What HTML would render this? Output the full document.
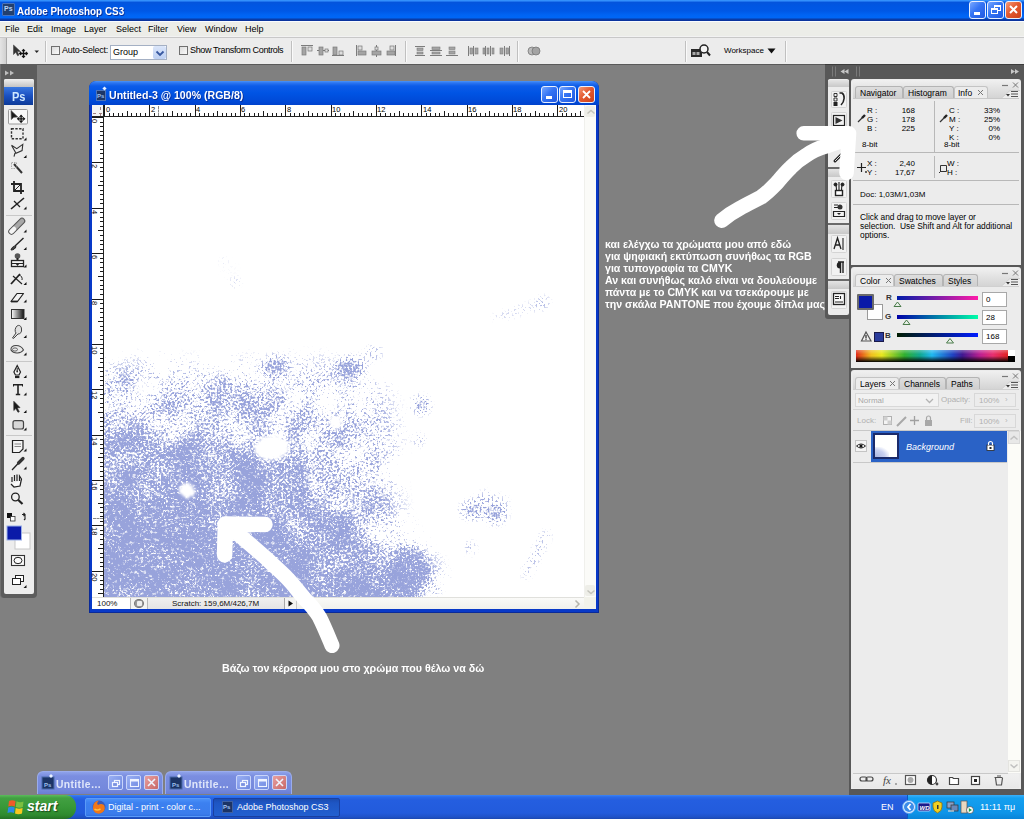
<!DOCTYPE html>
<html><head><meta charset="utf-8">
<style>
*{margin:0;padding:0;box-sizing:border-box}
html,body{width:1024px;height:819px;overflow:hidden;background:#808080;font-family:"Liberation Sans",sans-serif;position:relative}
.a{position:absolute}
.tx{position:absolute;white-space:nowrap;line-height:1}
svg{position:absolute;overflow:visible}
#title{left:0;top:0;width:1024px;height:21px;background:linear-gradient(#3c9cff 0,#2a84f8 1px,#0454dc 2.5px,#0056e2 5px,#0058e6 11px,#0064f4 15px,#0066f6 17.5px,#0a3ca8 19.5px,#0a3098 21px)}
.xb{top:1px;width:17px;height:18px;border:1px solid #e8f0ff;border-radius:3px;background:linear-gradient(135deg,#78a8ff,#3474f4 45%,#2058e0)}
#menu{left:0;top:21px;width:1024px;height:16px;background:#ecede8;border-top:1px solid #f8fcff;border-bottom:1px solid #f2f2f2}
.m{font-size:9px;color:#000;top:3px}
#opts{left:0;top:37px;width:1024px;height:28px;background:#ececec;border-top:1px solid #c8c8c8;border-bottom:1px solid #5a5a5a}
.sep{position:absolute;top:3px;width:2px;height:21px;border-left:1px solid #c0c0c0;border-right:1px solid #fafafa}
.o{font-size:9px;color:#000}
.cb{position:absolute;width:9px;height:9px;border:1px solid #707070;background:linear-gradient(135deg,#dcdcdc,#fafafa)}
.p{font-size:8px;color:#000}
.rl{font-size:7.5px;color:#000}
.tool{position:absolute;left:9px;width:18px;height:15px}
.tab{position:absolute;height:12px;border:1px solid #b4b4b4;border-bottom:none;border-radius:3px 3px 0 0;background:linear-gradient(#dedede,#cfcfcf)}
.tab.act{background:#ececec;border-color:#c4c4c4}
.phdr{position:absolute;left:851px;width:170px;background:linear-gradient(#f4f4f4,#d6d6d6)}
.ibox{position:absolute;background:#fff;border:1px solid #a8a8a8}
.mw{position:absolute;top:771px;height:23px;background:linear-gradient(#8ea2ea,#7b8ee0 4px,#7488dc 18px,#6a7ed4);border-radius:6px 6px 0 0;border:1px solid #9aacec;border-bottom:none}
.mb{position:absolute;top:4px;width:15px;height:15px;border:1px solid #c8d4fa;border-radius:2px;background:linear-gradient(135deg,#9ab0f4,#6e88e0)}
</style></head><body>
<!-- ===== TITLE ===== -->
<div id="title" class="a">
  <div class="a" style="left:2px;top:3px;width:13px;height:13px;background:#23406e;border:1px solid #4a72b8;border-radius:1px"><div class="tx" style="left:1px;top:1px;color:#b8d4f8;font-size:7px;font-weight:bold">Ps</div></div>
  <div class="tx" style="left:17px;top:6px;color:#fff;font-weight:bold;font-size:11.5px;transform:scaleX(.86);transform-origin:0 0;text-shadow:1px 1px 0 #0a3098">Adobe Photoshop CS3</div>
  <div class="a xb" style="left:969px"><div class="a" style="left:4px;top:10px;width:6px;height:3px;background:#fff"></div></div>
  <div class="a xb" style="left:987px"><div class="a" style="left:6px;top:3px;width:7px;height:6px;border:1px solid #fff;border-top-width:2px"></div><div class="a" style="left:3px;top:6px;width:7px;height:6px;border:1px solid #fff;border-top-width:2px;background:#3070f0"></div></div>
  <div class="a xb" style="left:1005px;background:linear-gradient(135deg,#f49a78,#e45a30 45%,#cc4018)"><svg width="15" height="16" style="left:0;top:0"><path d="M4 4L11 11M11 4L4 11" stroke="#fff" stroke-width="2"/></svg></div>
</div>

<!-- ===== MENU ===== -->
<div id="menu" class="a">
  <span class="tx m" style="left:5px">File</span><span class="tx m" style="left:27px">Edit</span><span class="tx m" style="left:51px">Image</span><span class="tx m" style="left:84px">Layer</span><span class="tx m" style="left:116px">Select</span><span class="tx m" style="left:148px">Filter</span><span class="tx m" style="left:177px">View</span><span class="tx m" style="left:205px">Window</span><span class="tx m" style="left:245px">Help</span>
</div>

<!-- ===== OPTIONS ===== -->
<div id="opts" class="a">
  <div class="a" style="left:0;top:0;width:7px;height:26px;background:linear-gradient(90deg,#e4e4e4,#d0d0d0);border-right:1px solid #a8a8a8"></div>
  <svg width="45" height="26" style="left:0;top:0">
    <path d="M13.5 7 L13.5 16.5 L15.8 14.3 L17.6 17.8 L19 17.1 L17.3 13.6 L20.5 13.6 Z" fill="#333" stroke="#444" stroke-width=".6"/>
    <path d="M19.8 15.5 h7.4 M23.5 11.8 v7.4" stroke="#111" stroke-width="1.3" fill="none"/>
    <path d="M22 13.2 L23.5 11.6 L25 13.2 M22 17.8 L23.5 19.4 L25 17.8 M21.2 14 L19.6 15.5 L21.2 17 M25.8 14 L27.4 15.5 L25.8 17" stroke="#111" stroke-width="1.1" fill="none"/>
    <path d="M34.5 12.5 h4.5 l-2.25 2.5z" fill="#222"/>
  </svg>
  <div class="sep" style="left:45px"></div>
  <div class="cb" style="left:51px;top:8px"></div><div class="tx o" style="left:62px;top:8px;letter-spacing:-0.25px">Auto-Select:</div>
  <div class="a" style="left:110px;top:7px;width:57px;height:15px;background:#fff;border:1px solid #a4b0c4"></div>
  <div class="tx o" style="left:113px;top:10px">Group</div>
  <div class="a" style="left:153px;top:8px;width:13px;height:13px;background:linear-gradient(#dbe6fa,#bccff2);border-radius:2px"></div>
  <svg width="10" height="8" style="left:155px;top:12px"><path d="M1.5 1.5 L5 5 L8.5 1.5" stroke="#3858a0" stroke-width="1.8" fill="none"/></svg>
  <div class="cb" style="left:179px;top:8px"></div><div class="tx o" style="left:190px;top:8px;letter-spacing:-0.36px">Show Transform Controls</div>
  <div class="sep" style="left:291px"></div>
  <svg width="250" height="14" style="left:299px;top:7px" fill="#8a8a8a" stroke="#777">
    <g stroke-width="1">
      <path d="M2 0.5 h12" stroke="#7c7c7c"/><rect x="3" y="2" width="4" height="8" fill="#a4a4a4" stroke="#7c7c7c" stroke-width=".7"/><rect x="9" y="2" width="4" height="4" fill="#ddd" stroke="#777" stroke-width=".7"/>
      <path d="M18 5.5 h12" stroke="#777"/><rect x="20" y="2" width="4" height="8" fill="#a4a4a4" stroke="#7c7c7c" stroke-width=".7"/><rect x="26" y="4" width="3" height="3" fill="#ddd" stroke="#777" stroke-width=".7"/>
      <path d="M33 10.5 h12" stroke="#7c7c7c"/><rect x="34" y="2" width="4" height="8" fill="#a4a4a4" stroke="#7c7c7c" stroke-width=".7"/><rect x="40" y="6" width="4" height="4" fill="#ddd" stroke="#777" stroke-width=".7"/>
      <path d="M57.5 0 v11" stroke="#7c7c7c"/><rect x="59" y="1" width="4" height="4" fill="#ddd" stroke="#777" stroke-width=".7"/><rect x="59" y="6" width="8" height="4" fill="#a4a4a4" stroke="#7c7c7c" stroke-width=".7"/>
      <path d="M77.5 0 v12" stroke="#7c7c7c"/><rect x="76" y="2" width="3" height="3" fill="#ddd" stroke="#777" stroke-width=".7"/><rect x="73" y="6" width="9" height="4" fill="#a4a4a4" stroke="#7c7c7c" stroke-width=".7"/>
      <path d="M96.5 0 v11" stroke="#7c7c7c"/><rect x="91" y="1" width="4" height="4" fill="#ddd" stroke="#777" stroke-width=".7"/><rect x="88" y="6" width="8" height="4" fill="#a4a4a4" stroke="#7c7c7c" stroke-width=".7"/>
    </g>
  </svg>
  <div class="sep" style="left:405px"></div>
  <svg width="140" height="14" style="left:413px;top:7px">
    <g stroke="#7c7c7c" stroke-width="1" fill="#a4a4a4">
      <path d="M2 1.5h10M2 10.5h10" /><rect x="4" y="3" width="6" height="2.5" stroke-width=".6"/><rect x="4" y="7" width="6" height="2" stroke-width=".6"/>
      <path d="M17 5.5h12M17 10.5h12"/><rect x="19" y="2" width="8" height="2.5" stroke-width=".6"/><rect x="19" y="7" width="8" height="2" stroke-width=".6"/>
      <path d="M33 10.5h12"/><rect x="36" y="2" width="6" height="2.5" stroke-width=".6"/><rect x="36" y="6" width="6" height="3" stroke-width=".6"/>
      <path d="M55.5 1v10M60.5 1v10"/><rect x="57" y="3" width="2.5" height="6" stroke-width=".6"/><rect x="62" y="3" width="3" height="6" stroke-width=".6"/>
      <path d="M72.5 1v10M77.5 1v10"/><rect x="70" y="3" width="2" height="6" stroke-width=".6"/><rect x="74" y="3" width="2" height="6" stroke-width=".6"/><rect x="79" y="3" width="2" height="6" stroke-width=".6"/>
      <path d="M91.5 1v10M96.5 1v10"/><rect x="87" y="3" width="3" height="6" stroke-width=".6"/><rect x="93" y="3" width="2.5" height="6" stroke-width=".6"/>
    </g>
    <g stroke="#777" fill="#bbb" stroke-width=".8"><circle cx="119" cy="6" r="4"/><circle cx="123" cy="6" r="4" fill="#a4a4a4"/></g>
  </svg>
  <div class="sep" style="left:517px"></div>
  <div class="sep" style="left:685px"></div>
  <svg width="22" height="16" style="left:690px;top:5px">
    <rect x="1" y="6" width="11" height="8" fill="#2a2a2a"/><rect x="2.5" y="9" width="3" height="3" fill="#aaa"/><rect x="6.5" y="9" width="3" height="3" fill="#aaa"/>
    <circle cx="14" cy="6" r="4" fill="#f4f4f4" stroke="#222" stroke-width="1.5"/><path d="M17 9 L20 12.5" stroke="#222" stroke-width="2"/>
  </svg>
  <div class="tx o" style="left:724px;top:9px;font-size:8px">Workspace</div>
  <svg width="10" height="8" style="left:767px;top:10px"><path d="M0.5 0.5 h8 l-4 5z" fill="#111"/></svg>
  <div class="sep" style="left:785px"></div>
</div>

<!-- ===== TOOLBOX ===== -->
<div class="a" style="left:0;top:64px;width:37px;height:534px;background:#5c5c5c;border-radius:0 0 4px 4px;border-left:1px solid #707070"></div>
<div class="a" style="left:4px;top:79px;width:30px;height:515px;background:#ededed;border-radius:2px"></div>
<div class="a" style="left:4px;top:79px;width:30px;height:8px;background:linear-gradient(#f0f0f0,#c4c4c4);border-radius:2px 2px 0 0"></div>
<div class="a" style="left:4px;top:87px;width:29px;height:18px;background:linear-gradient(#3a78e0,#1a50c0 50%,#0d3a98)"></div>
<div class="tx" style="left:12px;top:91px;color:#cfe8ff;font-weight:bold;font-size:12px;transform:scaleX(.92);transform-origin:0 0">Ps</div>
<svg width="37" height="534" style="left:0;top:64px">
  <path d="M5 6.5 L9 9 L5 11.5Z M10 6.5 L14 9 L10 11.5Z" fill="#bdbdbd"/>
</svg>
<svg width="37" height="600" style="left:0;top:0">
  <g fill="none" stroke="#222" stroke-width="1.2">
    <!-- move selected -->
    <rect x="8.5" y="109.5" width="19" height="14.5" rx="1" fill="#f8f8f8" stroke="#9a9a9a" stroke-width="1"/>
    <path d="M11 110.5 L17.8 117 L13.8 117.3 L11.3 119.5 Z" fill="#1a1a1a" stroke="#555" stroke-width=".7"/>
    <path d="M17.8 118.8h6.6 M21.1 115.5v6.6" stroke="#111" stroke-width="1.3"/><path d="M19.6 117 L21.1 115.3 L22.6 117 M19.6 120.6 L21.1 122.3 L22.6 120.6 M19.3 117.3 L17.6 118.8 L19.3 120.3 M22.9 117.3 L24.6 118.8 L22.9 120.3" stroke="#111" stroke-width="1.1"/>
    <!-- marquee -->
    <rect x="11.5" y="128.7" width="11.5" height="10" stroke-dasharray="2.4 1.4" stroke-width="1.4" stroke="#333"/>
    <!-- lasso -->
    <path d="M11.5 145.3 L16.8 148.6 L22.8 144.3 L22.1 150.6 L16 153.3 L11.5 145.3 M15 153 L14 156.7" stroke-width="1.1" stroke="#333"/>
    <!-- wand -->
    <path d="M14 164 L22 173" stroke-width="2" stroke="#333"/><rect x="11.5" y="162.5" width="5" height="6" stroke="#999" stroke-width=".8" stroke-dasharray="1.5 1"/>
    <!-- crop -->
    <path d="M14 181v10h10 M11 184h10v10" stroke-width="1.8"/><path d="M15 190 L21 184" stroke-width="1"/>
    <!-- slice -->
    <path d="M11 209 L24 198" stroke-width="1.6"/><path d="M14 201 L20 207" stroke-width="1.3"/>
    <!-- separator -->
    <path d="M6 215.5h26" stroke="#c8c8c8" stroke-width="1"/>
    <!-- heal -->
    <path d="M11.5 231.5 L22 221" stroke="#555" stroke-width="6.5" stroke-linecap="round"/><path d="M11.5 231.5 L22 221" stroke="#a8a8a8" stroke-width="4.5" stroke-linecap="round"/><path d="M11.5 231.5 L14 229" stroke="#f4f4f4" stroke-width="4.5" stroke-linecap="round"/>
    <!-- brush -->
    <path d="M15 246 L23.5 238" stroke-width="1.4"/><path d="M11 250 C12 247 14 245.5 16 246.5 C15.5 248.5 13.5 250 11 250Z" fill="#444" stroke-width="1"/>
    <!-- stamp -->
    <circle cx="17.5" cy="256" r="2.8" fill="#555" stroke="none"/><path d="M17.5 258v2.5" stroke-width="2"/><rect x="11.5" y="260.5" width="12" height="6" fill="#f4f4f4" stroke-width="1.3"/><path d="M11.5 263.5h12" stroke-width="1"/><path d="M15.5 263.5 h4 l-2 2.5z" fill="#222" stroke="none"/>
    <!-- history -->
    <path d="M11 284 L20 274" stroke-width="1.8"/><path d="M13 276 L22 284" stroke-width="1.2"/><path d="M19 275 a4 4 0 0 1 3 5" stroke-width="1"/>
    <!-- eraser -->
    <path d="M11 301.5 L17 293.5 L23.5 293.5 L17.5 301.5 Z" fill="#f4f4f4" stroke-width="1.2" stroke-linejoin="round"/><path d="M11 301.5 h6.5" stroke-width="1.8"/>
    <!-- gradient -->
    <defs><linearGradient id="tg"><stop offset="0" stop-color="#fff"/><stop offset="1" stop-color="#111"/></linearGradient></defs>
    <rect x="11.5" y="309.5" width="12.5" height="9" fill="url(#tg)" stroke="#333" stroke-width="1"/>
    <!-- blur -->
    <path d="M12.5 338 L16 333 C14.5 331 15 328 17 326 C19 324.5 21.5 326 21.5 329 C22 332 20.5 334 18 334 L13.5 338.5Z" fill="#e0e0e0" stroke="#444" stroke-width="1"/>
    <!-- dodge -->
    <path d="M11 350 C10.5 347 13 345.5 16 345.5 C19 345.5 22 347 23.5 350 C21 353.5 14 354.5 11 350Z" fill="#e8e8e8" stroke="#444" stroke-width="1.1"/><ellipse cx="15" cy="349.5" rx="2.5" ry="1.6" fill="none" stroke="#555" stroke-width=".9"/>
    <path d="M6 361.5h26" stroke="#c8c8c8" stroke-width="1"/>
    <!-- pen -->
    <path d="M17.2 365.5 L20.5 372 L19 375 h-3.6 L13.9 372 Z" fill="#f4f4f4" stroke-width="1.2"/><path d="M17.2 368v3.5" stroke-width="1"/><circle cx="17.2" cy="371.5" r=".9" fill="#333" stroke="none"/><path d="M15 377h4.4" stroke-width="2.2"/>
    <!-- type T -->
    <path d="M13.3 384.8h9.4 M18 384.5v10 M15.8 394.5h4.4" stroke-width="1.6"/><path d="M13.5 384 v2.5 M22.5 384 v2.5" stroke-width="1"/>
    <!-- path selection -->
    <path d="M13.8 401.3 L13.8 410.5 L15.8 408.6 L18 412.3 L19.3 411.6 L17.2 407.9 L20 407.6 Z" fill="#1a1a1a" stroke="#333" stroke-width=".7"/>
    <!-- shape -->
    <rect x="13" y="420.7" width="10.5" height="8.3" rx="2" fill="#d8d8d8" stroke="#444" stroke-width="1.2"/>
    <path d="M6 435.5h26" stroke="#c8c8c8" stroke-width="1"/>
    <!-- notes -->
    <path d="M12.5 440.5h10.5v8.5l-3.5 3.5h-7z" fill="#f4f4f4" stroke-width="1.2"/><path d="M14.5 444h6.5 M14.5 446.5h6.5" stroke="#888" stroke-width="1"/>
    <!-- eyedropper -->
    <path d="M12 470 L19.5 462" stroke-width="1.2"/><path d="M18.5 463 L23 458.5" stroke="#333" stroke-width="3.2" stroke-linecap="round"/>
    <!-- hand -->
    <path d="M12 482 L12 477 M14.5 481 L14.5 475 M17 481 L17 474.5 M19.5 481 L19.5 476 L21.5 479 L20 486 L14 487 L11 484" stroke-width="1.2" fill="#fafafa"/>
    <!-- zoom -->
    <circle cx="15.4" cy="497" r="3.8" stroke-width="1.3" fill="#f0f0f0"/><path d="M18.3 500 L22.5 504" stroke-width="2.2"/>
    <!-- default colors -->
    <rect x="7" y="513" width="5" height="5" fill="#111" stroke="none"/><rect x="10.5" y="516.5" width="4.5" height="4.5" fill="#fff" stroke="#333" stroke-width=".8"/>
    <path d="M22 514.5 h3 v4 M23.5 513 l1.5 1.5 l-1.5 1.5 M24 520 l1.5 -1.5" stroke-width="1.1"/>
    <!-- quick mask -->
    <rect x="11.5" y="555.5" width="13" height="10" fill="#fafafa" stroke="#333" stroke-width="1.1"/><ellipse cx="18" cy="560.5" rx="4" ry="3.2" stroke-width="1"/>
    <!-- screen mode -->
    <rect x="15.5" y="575.5" width="8" height="6" fill="#fff" stroke-width="1"/><rect x="12.5" y="578.5" width="8" height="6" fill="#fff" stroke-width="1"/>
  </g>
  <!-- flyout triangles -->
  <g fill="#111">
    <path d="M23.5 140.5h3v-3z M23.5 158h3v-3z M23.5 209.5h3v-3z M23.5 232.5h3v-3z M23.5 250h3v-3z M23.5 267.5h3v-3z M23.5 285h3v-3z M23.5 302.5h3v-3z M23.5 320h3v-3z M23.5 338h3v-3z M23.5 355.5h3v-3z M23.5 378h3v-3z M23.5 395.5h3v-3z M23.5 413h3v-3z M23.5 430.5h3v-3z M23.5 451.5h3v-3z M23.5 469.5h3v-3z M23.5 588h3v-3z"/>
  </g>
  <!-- fg/bg colors -->
  <rect x="15" y="533" width="15" height="16" fill="#fff" stroke="#c8c8c8" stroke-width="1"/>
  <rect x="7" y="526" width="14.5" height="14" fill="#0a1aa8" stroke="#9ab0e8" stroke-width="1"/>
</svg>

<!-- ===== DOC WINDOW ===== -->
<div class="a" style="left:89px;top:81px;width:510px;height:532px;background:#0839c8;border-radius:7px 7px 0 0;border:1px solid #0a2a98;border-top:none"></div>
<div class="a" style="left:89px;top:81px;width:510px;height:24px;background:linear-gradient(#4a94f8 0,#2a74f0 2px,#0c5ce8 5px,#0054e4 12px,#004ad8 20px,#0042cc 24px);border-radius:7px 7px 0 0"></div>
<div class="a" style="left:96px;top:90px;width:10px;height:11px;background:#1c3668;border:1px solid #4e74b8"></div>
<div class="tx" style="left:97px;top:93px;color:#9cc0f0;font-size:6px;font-weight:bold">Ps</div>
<div class="a" style="left:103px;top:87px;width:3px;height:3px;background:#e8f0ff;transform:rotate(45deg)"></div>
<div class="tx" style="left:109px;top:90px;color:#fff;font-weight:bold;font-size:11.5px;transform:scaleX(.92);transform-origin:0 0;text-shadow:1px 1px 0 #0a3098">Untitled-3 @ 100% (RGB/8)</div>
<div class="a xb" style="left:541px;top:86px;width:17px;height:17px"><div class="a" style="left:4px;top:9px;width:6px;height:3px;background:#fff"></div></div>
<div class="a xb" style="left:559px;top:86px;width:17px;height:17px"><div class="a" style="left:3px;top:3px;width:9px;height:8px;border:1px solid #fff;border-top-width:3px"></div></div>
<div class="a xb" style="left:578px;top:86px;width:17px;height:17px;background:linear-gradient(135deg,#f49a78,#e45a30 45%,#cc4018)"><svg width="15" height="15" style="left:0;top:0"><path d="M4 4L11 11M11 4L4 11" stroke="#fff" stroke-width="1.8"/></svg></div>
<!-- content -->
<div class="a" style="left:92px;top:105px;width:504px;height:504px;background:#fff"></div>
<!-- rulers -->
<div class="a" style="left:92px;top:105px;width:492px;height:12px;background:#fff;border-bottom:1px solid #222"></div>
<div class="a" style="left:92px;top:105px;width:12px;height:492px;background:#fff;border-right:1px solid #222"></div>
<div class="a" style="left:92px;top:105px;width:12px;height:12px;background:#f4f4f4;border-right:1px solid #222;border-bottom:1px solid #222"></div>
<div class="a" style="left:100px;top:107px;width:1px;height:9px;border-left:1px dashed #a08080"></div>
<div class="a" style="left:93px;top:113px;width:9px;height:1px;border-top:1px dashed #a08080"></div>
<div class="a" style="left:104px;top:105px;width:1px;height:11px;background:#1a1a1a"></div>
<div class="tx rl" style="left:106px;top:106px">0</div>
<div class="a" style="left:109px;top:113px;width:1px;height:3px;background:#1a1a1a"></div>
<div class="a" style="left:113px;top:113px;width:1px;height:3px;background:#1a1a1a"></div>
<div class="a" style="left:118px;top:113px;width:1px;height:3px;background:#1a1a1a"></div>
<div class="a" style="left:122px;top:113px;width:1px;height:3px;background:#1a1a1a"></div>
<div class="a" style="left:127px;top:111px;width:1px;height:5px;background:#1a1a1a"></div>
<div class="a" style="left:131px;top:113px;width:1px;height:3px;background:#1a1a1a"></div>
<div class="a" style="left:136px;top:113px;width:1px;height:3px;background:#1a1a1a"></div>
<div class="a" style="left:140px;top:113px;width:1px;height:3px;background:#1a1a1a"></div>
<div class="a" style="left:145px;top:113px;width:1px;height:3px;background:#1a1a1a"></div>
<div class="a" style="left:149px;top:105px;width:1px;height:11px;background:#1a1a1a"></div>
<div class="tx rl" style="left:151px;top:106px">2</div>
<div class="a" style="left:154px;top:113px;width:1px;height:3px;background:#1a1a1a"></div>
<div class="a" style="left:158px;top:113px;width:1px;height:3px;background:#1a1a1a"></div>
<div class="a" style="left:163px;top:113px;width:1px;height:3px;background:#1a1a1a"></div>
<div class="a" style="left:167px;top:113px;width:1px;height:3px;background:#1a1a1a"></div>
<div class="a" style="left:172px;top:111px;width:1px;height:5px;background:#1a1a1a"></div>
<div class="a" style="left:177px;top:113px;width:1px;height:3px;background:#1a1a1a"></div>
<div class="a" style="left:181px;top:113px;width:1px;height:3px;background:#1a1a1a"></div>
<div class="a" style="left:186px;top:113px;width:1px;height:3px;background:#1a1a1a"></div>
<div class="a" style="left:190px;top:113px;width:1px;height:3px;background:#1a1a1a"></div>
<div class="a" style="left:195px;top:105px;width:1px;height:11px;background:#1a1a1a"></div>
<div class="tx rl" style="left:196px;top:106px">4</div>
<div class="a" style="left:199px;top:113px;width:1px;height:3px;background:#1a1a1a"></div>
<div class="a" style="left:204px;top:113px;width:1px;height:3px;background:#1a1a1a"></div>
<div class="a" style="left:208px;top:113px;width:1px;height:3px;background:#1a1a1a"></div>
<div class="a" style="left:213px;top:113px;width:1px;height:3px;background:#1a1a1a"></div>
<div class="a" style="left:217px;top:111px;width:1px;height:5px;background:#1a1a1a"></div>
<div class="a" style="left:222px;top:113px;width:1px;height:3px;background:#1a1a1a"></div>
<div class="a" style="left:226px;top:113px;width:1px;height:3px;background:#1a1a1a"></div>
<div class="a" style="left:231px;top:113px;width:1px;height:3px;background:#1a1a1a"></div>
<div class="a" style="left:235px;top:113px;width:1px;height:3px;background:#1a1a1a"></div>
<div class="a" style="left:240px;top:105px;width:1px;height:11px;background:#1a1a1a"></div>
<div class="tx rl" style="left:241px;top:106px">6</div>
<div class="a" style="left:244px;top:113px;width:1px;height:3px;background:#1a1a1a"></div>
<div class="a" style="left:249px;top:113px;width:1px;height:3px;background:#1a1a1a"></div>
<div class="a" style="left:254px;top:113px;width:1px;height:3px;background:#1a1a1a"></div>
<div class="a" style="left:258px;top:113px;width:1px;height:3px;background:#1a1a1a"></div>
<div class="a" style="left:263px;top:111px;width:1px;height:5px;background:#1a1a1a"></div>
<div class="a" style="left:267px;top:113px;width:1px;height:3px;background:#1a1a1a"></div>
<div class="a" style="left:272px;top:113px;width:1px;height:3px;background:#1a1a1a"></div>
<div class="a" style="left:276px;top:113px;width:1px;height:3px;background:#1a1a1a"></div>
<div class="a" style="left:281px;top:113px;width:1px;height:3px;background:#1a1a1a"></div>
<div class="a" style="left:285px;top:105px;width:1px;height:11px;background:#1a1a1a"></div>
<div class="tx rl" style="left:287px;top:106px">8</div>
<div class="a" style="left:290px;top:113px;width:1px;height:3px;background:#1a1a1a"></div>
<div class="a" style="left:294px;top:113px;width:1px;height:3px;background:#1a1a1a"></div>
<div class="a" style="left:299px;top:113px;width:1px;height:3px;background:#1a1a1a"></div>
<div class="a" style="left:303px;top:113px;width:1px;height:3px;background:#1a1a1a"></div>
<div class="a" style="left:308px;top:111px;width:1px;height:5px;background:#1a1a1a"></div>
<div class="a" style="left:312px;top:113px;width:1px;height:3px;background:#1a1a1a"></div>
<div class="a" style="left:317px;top:113px;width:1px;height:3px;background:#1a1a1a"></div>
<div class="a" style="left:322px;top:113px;width:1px;height:3px;background:#1a1a1a"></div>
<div class="a" style="left:326px;top:113px;width:1px;height:3px;background:#1a1a1a"></div>
<div class="a" style="left:331px;top:105px;width:1px;height:11px;background:#1a1a1a"></div>
<div class="tx rl" style="left:332px;top:106px">10</div>
<div class="a" style="left:335px;top:113px;width:1px;height:3px;background:#1a1a1a"></div>
<div class="a" style="left:340px;top:113px;width:1px;height:3px;background:#1a1a1a"></div>
<div class="a" style="left:344px;top:113px;width:1px;height:3px;background:#1a1a1a"></div>
<div class="a" style="left:349px;top:113px;width:1px;height:3px;background:#1a1a1a"></div>
<div class="a" style="left:353px;top:111px;width:1px;height:5px;background:#1a1a1a"></div>
<div class="a" style="left:358px;top:113px;width:1px;height:3px;background:#1a1a1a"></div>
<div class="a" style="left:362px;top:113px;width:1px;height:3px;background:#1a1a1a"></div>
<div class="a" style="left:367px;top:113px;width:1px;height:3px;background:#1a1a1a"></div>
<div class="a" style="left:371px;top:113px;width:1px;height:3px;background:#1a1a1a"></div>
<div class="a" style="left:376px;top:105px;width:1px;height:11px;background:#1a1a1a"></div>
<div class="tx rl" style="left:377px;top:106px">12</div>
<div class="a" style="left:380px;top:113px;width:1px;height:3px;background:#1a1a1a"></div>
<div class="a" style="left:385px;top:113px;width:1px;height:3px;background:#1a1a1a"></div>
<div class="a" style="left:390px;top:113px;width:1px;height:3px;background:#1a1a1a"></div>
<div class="a" style="left:394px;top:113px;width:1px;height:3px;background:#1a1a1a"></div>
<div class="a" style="left:399px;top:111px;width:1px;height:5px;background:#1a1a1a"></div>
<div class="a" style="left:403px;top:113px;width:1px;height:3px;background:#1a1a1a"></div>
<div class="a" style="left:408px;top:113px;width:1px;height:3px;background:#1a1a1a"></div>
<div class="a" style="left:412px;top:113px;width:1px;height:3px;background:#1a1a1a"></div>
<div class="a" style="left:417px;top:113px;width:1px;height:3px;background:#1a1a1a"></div>
<div class="a" style="left:421px;top:105px;width:1px;height:11px;background:#1a1a1a"></div>
<div class="tx rl" style="left:423px;top:106px">14</div>
<div class="a" style="left:426px;top:113px;width:1px;height:3px;background:#1a1a1a"></div>
<div class="a" style="left:430px;top:113px;width:1px;height:3px;background:#1a1a1a"></div>
<div class="a" style="left:435px;top:113px;width:1px;height:3px;background:#1a1a1a"></div>
<div class="a" style="left:439px;top:113px;width:1px;height:3px;background:#1a1a1a"></div>
<div class="a" style="left:444px;top:111px;width:1px;height:5px;background:#1a1a1a"></div>
<div class="a" style="left:448px;top:113px;width:1px;height:3px;background:#1a1a1a"></div>
<div class="a" style="left:453px;top:113px;width:1px;height:3px;background:#1a1a1a"></div>
<div class="a" style="left:457px;top:113px;width:1px;height:3px;background:#1a1a1a"></div>
<div class="a" style="left:462px;top:113px;width:1px;height:3px;background:#1a1a1a"></div>
<div class="a" style="left:467px;top:105px;width:1px;height:11px;background:#1a1a1a"></div>
<div class="tx rl" style="left:468px;top:106px">16</div>
<div class="a" style="left:471px;top:113px;width:1px;height:3px;background:#1a1a1a"></div>
<div class="a" style="left:476px;top:113px;width:1px;height:3px;background:#1a1a1a"></div>
<div class="a" style="left:480px;top:113px;width:1px;height:3px;background:#1a1a1a"></div>
<div class="a" style="left:485px;top:113px;width:1px;height:3px;background:#1a1a1a"></div>
<div class="a" style="left:489px;top:111px;width:1px;height:5px;background:#1a1a1a"></div>
<div class="a" style="left:494px;top:113px;width:1px;height:3px;background:#1a1a1a"></div>
<div class="a" style="left:498px;top:113px;width:1px;height:3px;background:#1a1a1a"></div>
<div class="a" style="left:503px;top:113px;width:1px;height:3px;background:#1a1a1a"></div>
<div class="a" style="left:507px;top:113px;width:1px;height:3px;background:#1a1a1a"></div>
<div class="a" style="left:512px;top:105px;width:1px;height:11px;background:#1a1a1a"></div>
<div class="tx rl" style="left:513px;top:106px">18</div>
<div class="a" style="left:516px;top:113px;width:1px;height:3px;background:#1a1a1a"></div>
<div class="a" style="left:521px;top:113px;width:1px;height:3px;background:#1a1a1a"></div>
<div class="a" style="left:525px;top:113px;width:1px;height:3px;background:#1a1a1a"></div>
<div class="a" style="left:530px;top:113px;width:1px;height:3px;background:#1a1a1a"></div>
<div class="a" style="left:535px;top:111px;width:1px;height:5px;background:#1a1a1a"></div>
<div class="a" style="left:539px;top:113px;width:1px;height:3px;background:#1a1a1a"></div>
<div class="a" style="left:544px;top:113px;width:1px;height:3px;background:#1a1a1a"></div>
<div class="a" style="left:548px;top:113px;width:1px;height:3px;background:#1a1a1a"></div>
<div class="a" style="left:553px;top:113px;width:1px;height:3px;background:#1a1a1a"></div>
<div class="a" style="left:557px;top:105px;width:1px;height:11px;background:#1a1a1a"></div>
<div class="tx rl" style="left:559px;top:106px">20</div>
<div class="a" style="left:562px;top:113px;width:1px;height:3px;background:#1a1a1a"></div>
<div class="a" style="left:566px;top:113px;width:1px;height:3px;background:#1a1a1a"></div>
<div class="a" style="left:571px;top:113px;width:1px;height:3px;background:#1a1a1a"></div>
<div class="a" style="left:575px;top:113px;width:1px;height:3px;background:#1a1a1a"></div>
<div class="a" style="left:580px;top:111px;width:1px;height:5px;background:#1a1a1a"></div>
<div class="a" style="left:92px;top:117px;width:11px;height:1px;background:#1a1a1a"></div>
<div class="tx rl" style="left:98px;top:119px;transform:rotate(90deg);transform-origin:0 0">0</div>
<div class="a" style="left:100px;top:122px;width:3px;height:1px;background:#1a1a1a"></div>
<div class="a" style="left:100px;top:126px;width:3px;height:1px;background:#1a1a1a"></div>
<div class="a" style="left:100px;top:131px;width:3px;height:1px;background:#1a1a1a"></div>
<div class="a" style="left:100px;top:135px;width:3px;height:1px;background:#1a1a1a"></div>
<div class="a" style="left:98px;top:140px;width:5px;height:1px;background:#1a1a1a"></div>
<div class="a" style="left:100px;top:144px;width:3px;height:1px;background:#1a1a1a"></div>
<div class="a" style="left:100px;top:149px;width:3px;height:1px;background:#1a1a1a"></div>
<div class="a" style="left:100px;top:153px;width:3px;height:1px;background:#1a1a1a"></div>
<div class="a" style="left:100px;top:158px;width:3px;height:1px;background:#1a1a1a"></div>
<div class="a" style="left:92px;top:162px;width:11px;height:1px;background:#1a1a1a"></div>
<div class="tx rl" style="left:98px;top:164px;transform:rotate(90deg);transform-origin:0 0">2</div>
<div class="a" style="left:100px;top:167px;width:3px;height:1px;background:#1a1a1a"></div>
<div class="a" style="left:100px;top:171px;width:3px;height:1px;background:#1a1a1a"></div>
<div class="a" style="left:100px;top:176px;width:3px;height:1px;background:#1a1a1a"></div>
<div class="a" style="left:100px;top:181px;width:3px;height:1px;background:#1a1a1a"></div>
<div class="a" style="left:98px;top:185px;width:5px;height:1px;background:#1a1a1a"></div>
<div class="a" style="left:100px;top:190px;width:3px;height:1px;background:#1a1a1a"></div>
<div class="a" style="left:100px;top:194px;width:3px;height:1px;background:#1a1a1a"></div>
<div class="a" style="left:100px;top:199px;width:3px;height:1px;background:#1a1a1a"></div>
<div class="a" style="left:100px;top:203px;width:3px;height:1px;background:#1a1a1a"></div>
<div class="a" style="left:92px;top:208px;width:11px;height:1px;background:#1a1a1a"></div>
<div class="tx rl" style="left:98px;top:210px;transform:rotate(90deg);transform-origin:0 0">4</div>
<div class="a" style="left:100px;top:212px;width:3px;height:1px;background:#1a1a1a"></div>
<div class="a" style="left:100px;top:217px;width:3px;height:1px;background:#1a1a1a"></div>
<div class="a" style="left:100px;top:221px;width:3px;height:1px;background:#1a1a1a"></div>
<div class="a" style="left:100px;top:226px;width:3px;height:1px;background:#1a1a1a"></div>
<div class="a" style="left:98px;top:230px;width:5px;height:1px;background:#1a1a1a"></div>
<div class="a" style="left:100px;top:235px;width:3px;height:1px;background:#1a1a1a"></div>
<div class="a" style="left:100px;top:240px;width:3px;height:1px;background:#1a1a1a"></div>
<div class="a" style="left:100px;top:244px;width:3px;height:1px;background:#1a1a1a"></div>
<div class="a" style="left:100px;top:249px;width:3px;height:1px;background:#1a1a1a"></div>
<div class="a" style="left:92px;top:253px;width:11px;height:1px;background:#1a1a1a"></div>
<div class="tx rl" style="left:98px;top:255px;transform:rotate(90deg);transform-origin:0 0">6</div>
<div class="a" style="left:100px;top:258px;width:3px;height:1px;background:#1a1a1a"></div>
<div class="a" style="left:100px;top:262px;width:3px;height:1px;background:#1a1a1a"></div>
<div class="a" style="left:100px;top:267px;width:3px;height:1px;background:#1a1a1a"></div>
<div class="a" style="left:100px;top:271px;width:3px;height:1px;background:#1a1a1a"></div>
<div class="a" style="left:98px;top:276px;width:5px;height:1px;background:#1a1a1a"></div>
<div class="a" style="left:100px;top:280px;width:3px;height:1px;background:#1a1a1a"></div>
<div class="a" style="left:100px;top:285px;width:3px;height:1px;background:#1a1a1a"></div>
<div class="a" style="left:100px;top:289px;width:3px;height:1px;background:#1a1a1a"></div>
<div class="a" style="left:100px;top:294px;width:3px;height:1px;background:#1a1a1a"></div>
<div class="a" style="left:92px;top:299px;width:11px;height:1px;background:#1a1a1a"></div>
<div class="tx rl" style="left:98px;top:301px;transform:rotate(90deg);transform-origin:0 0">8</div>
<div class="a" style="left:100px;top:303px;width:3px;height:1px;background:#1a1a1a"></div>
<div class="a" style="left:100px;top:308px;width:3px;height:1px;background:#1a1a1a"></div>
<div class="a" style="left:100px;top:312px;width:3px;height:1px;background:#1a1a1a"></div>
<div class="a" style="left:100px;top:317px;width:3px;height:1px;background:#1a1a1a"></div>
<div class="a" style="left:98px;top:321px;width:5px;height:1px;background:#1a1a1a"></div>
<div class="a" style="left:100px;top:326px;width:3px;height:1px;background:#1a1a1a"></div>
<div class="a" style="left:100px;top:330px;width:3px;height:1px;background:#1a1a1a"></div>
<div class="a" style="left:100px;top:335px;width:3px;height:1px;background:#1a1a1a"></div>
<div class="a" style="left:100px;top:339px;width:3px;height:1px;background:#1a1a1a"></div>
<div class="a" style="left:92px;top:344px;width:11px;height:1px;background:#1a1a1a"></div>
<div class="tx rl" style="left:98px;top:346px;transform:rotate(90deg);transform-origin:0 0">10</div>
<div class="a" style="left:100px;top:348px;width:3px;height:1px;background:#1a1a1a"></div>
<div class="a" style="left:100px;top:353px;width:3px;height:1px;background:#1a1a1a"></div>
<div class="a" style="left:100px;top:358px;width:3px;height:1px;background:#1a1a1a"></div>
<div class="a" style="left:100px;top:362px;width:3px;height:1px;background:#1a1a1a"></div>
<div class="a" style="left:98px;top:367px;width:5px;height:1px;background:#1a1a1a"></div>
<div class="a" style="left:100px;top:371px;width:3px;height:1px;background:#1a1a1a"></div>
<div class="a" style="left:100px;top:376px;width:3px;height:1px;background:#1a1a1a"></div>
<div class="a" style="left:100px;top:380px;width:3px;height:1px;background:#1a1a1a"></div>
<div class="a" style="left:100px;top:385px;width:3px;height:1px;background:#1a1a1a"></div>
<div class="a" style="left:92px;top:389px;width:11px;height:1px;background:#1a1a1a"></div>
<div class="tx rl" style="left:98px;top:391px;transform:rotate(90deg);transform-origin:0 0">12</div>
<div class="a" style="left:100px;top:394px;width:3px;height:1px;background:#1a1a1a"></div>
<div class="a" style="left:100px;top:398px;width:3px;height:1px;background:#1a1a1a"></div>
<div class="a" style="left:100px;top:403px;width:3px;height:1px;background:#1a1a1a"></div>
<div class="a" style="left:100px;top:407px;width:3px;height:1px;background:#1a1a1a"></div>
<div class="a" style="left:98px;top:412px;width:5px;height:1px;background:#1a1a1a"></div>
<div class="a" style="left:100px;top:417px;width:3px;height:1px;background:#1a1a1a"></div>
<div class="a" style="left:100px;top:421px;width:3px;height:1px;background:#1a1a1a"></div>
<div class="a" style="left:100px;top:426px;width:3px;height:1px;background:#1a1a1a"></div>
<div class="a" style="left:100px;top:430px;width:3px;height:1px;background:#1a1a1a"></div>
<div class="a" style="left:92px;top:435px;width:11px;height:1px;background:#1a1a1a"></div>
<div class="tx rl" style="left:98px;top:437px;transform:rotate(90deg);transform-origin:0 0">14</div>
<div class="a" style="left:100px;top:439px;width:3px;height:1px;background:#1a1a1a"></div>
<div class="a" style="left:100px;top:444px;width:3px;height:1px;background:#1a1a1a"></div>
<div class="a" style="left:100px;top:448px;width:3px;height:1px;background:#1a1a1a"></div>
<div class="a" style="left:100px;top:453px;width:3px;height:1px;background:#1a1a1a"></div>
<div class="a" style="left:98px;top:457px;width:5px;height:1px;background:#1a1a1a"></div>
<div class="a" style="left:100px;top:462px;width:3px;height:1px;background:#1a1a1a"></div>
<div class="a" style="left:100px;top:466px;width:3px;height:1px;background:#1a1a1a"></div>
<div class="a" style="left:100px;top:471px;width:3px;height:1px;background:#1a1a1a"></div>
<div class="a" style="left:100px;top:476px;width:3px;height:1px;background:#1a1a1a"></div>
<div class="a" style="left:92px;top:480px;width:11px;height:1px;background:#1a1a1a"></div>
<div class="tx rl" style="left:98px;top:482px;transform:rotate(90deg);transform-origin:0 0">16</div>
<div class="a" style="left:100px;top:485px;width:3px;height:1px;background:#1a1a1a"></div>
<div class="a" style="left:100px;top:489px;width:3px;height:1px;background:#1a1a1a"></div>
<div class="a" style="left:100px;top:494px;width:3px;height:1px;background:#1a1a1a"></div>
<div class="a" style="left:100px;top:498px;width:3px;height:1px;background:#1a1a1a"></div>
<div class="a" style="left:98px;top:503px;width:5px;height:1px;background:#1a1a1a"></div>
<div class="a" style="left:100px;top:507px;width:3px;height:1px;background:#1a1a1a"></div>
<div class="a" style="left:100px;top:512px;width:3px;height:1px;background:#1a1a1a"></div>
<div class="a" style="left:100px;top:516px;width:3px;height:1px;background:#1a1a1a"></div>
<div class="a" style="left:100px;top:521px;width:3px;height:1px;background:#1a1a1a"></div>
<div class="a" style="left:92px;top:525px;width:11px;height:1px;background:#1a1a1a"></div>
<div class="tx rl" style="left:98px;top:527px;transform:rotate(90deg);transform-origin:0 0">18</div>
<div class="a" style="left:100px;top:530px;width:3px;height:1px;background:#1a1a1a"></div>
<div class="a" style="left:100px;top:534px;width:3px;height:1px;background:#1a1a1a"></div>
<div class="a" style="left:100px;top:539px;width:3px;height:1px;background:#1a1a1a"></div>
<div class="a" style="left:100px;top:544px;width:3px;height:1px;background:#1a1a1a"></div>
<div class="a" style="left:98px;top:548px;width:5px;height:1px;background:#1a1a1a"></div>
<div class="a" style="left:100px;top:553px;width:3px;height:1px;background:#1a1a1a"></div>
<div class="a" style="left:100px;top:557px;width:3px;height:1px;background:#1a1a1a"></div>
<div class="a" style="left:100px;top:562px;width:3px;height:1px;background:#1a1a1a"></div>
<div class="a" style="left:100px;top:566px;width:3px;height:1px;background:#1a1a1a"></div>
<div class="a" style="left:92px;top:571px;width:11px;height:1px;background:#1a1a1a"></div>
<div class="tx rl" style="left:98px;top:573px;transform:rotate(90deg);transform-origin:0 0">20</div>
<div class="a" style="left:100px;top:575px;width:3px;height:1px;background:#1a1a1a"></div>
<div class="a" style="left:100px;top:580px;width:3px;height:1px;background:#1a1a1a"></div>
<div class="a" style="left:100px;top:584px;width:3px;height:1px;background:#1a1a1a"></div>
<div class="a" style="left:100px;top:589px;width:3px;height:1px;background:#1a1a1a"></div>
<div class="a" style="left:98px;top:593px;width:5px;height:1px;background:#1a1a1a"></div>
<div class="a" style="left:158px;top:106px;width:1px;height:10px;border-left:1px dashed #888"></div>
<div class="a" style="left:93px;top:518px;width:10px;height:1px;border-top:1px dashed #888"></div>
<!-- canvas texture -->
<div class="a" style="left:104px;top:117px;width:480px;height:480px;overflow:hidden"><svg width="480" height="480" style="left:0;top:0">
<defs>
<filter id="grain" x="-80" y="-80" width="640" height="640" filterUnits="userSpaceOnUse" color-interpolation-filters="sRGB">
  <feGaussianBlur in="SourceGraphic" stdDeviation="18" result="d"/>
  <feTurbulence type="fractalNoise" baseFrequency="0.45" numOctaves="2" seed="11" result="nf"/>
  <feTurbulence type="fractalNoise" baseFrequency="0.03" numOctaves="4" seed="5" result="nc"/>
  <feComposite in="nf" in2="nc" operator="arithmetic" k1="0" k2="0.8" k3="0.4" k4="0" result="n"/>
  <feColorMatrix in="n" type="matrix" values="0 0 0 0 0  0 0 0 0 0  0 0 0 0 0  2.6 0 0 0 -0.7" result="na"/>
  <feComposite in="d" in2="na" operator="arithmetic" k1="0" k2="3" k3="3" k4="-3.3" result="c"/>
  <feFlood flood-color="#98a3db"/>
  <feComposite in2="c" operator="in"/>
</filter>
<filter id="grain2" x="-80" y="-80" width="640" height="640" filterUnits="userSpaceOnUse" color-interpolation-filters="sRGB">
  <feGaussianBlur in="SourceGraphic" stdDeviation="6" result="d"/>
  <feTurbulence type="fractalNoise" baseFrequency="0.5" numOctaves="2" seed="3" result="n"/>
  <feColorMatrix in="n" type="matrix" values="0 0 0 0 0  0 0 0 0 0  0 0 0 0 0  2.4 0 0 0 -0.6" result="na"/>
  <feComposite in="d" in2="na" operator="arithmetic" k1="0" k2="3" k3="3" k4="-3.3" result="c"/>
  <feFlood flood-color="#98a3db"/>
  <feComposite in2="c" operator="in"/>
</filter>
</defs>
<g filter="url(#grain)">
  <rect x="-80" y="-80" width="640" height="640" fill="none"/>
  <path d="M-80 245 L0 245 C40 240 80 250 120 248 C170 240 220 240 262 250 C295 270 300 320 290 370 C300 410 320 450 310 480 L310 560 L-80 560Z" fill="#000" opacity=".5"/>
  <path d="M-80 320 L0 320 C60 310 140 320 200 345 C250 375 280 420 285 480 L285 560 L-80 560Z" fill="#000" opacity=".68"/>
  <path d="M-80 390 L0 390 C60 380 140 385 190 410 C230 440 245 470 250 480 L250 560 L-80 560Z" fill="#000" opacity="1"/>
    <ellipse cx="306" cy="463" rx="28" ry="28" fill="#000" opacity=".9"/>
  <ellipse cx="125" cy="152" rx="15" ry="22" fill="#000" opacity=".3"/>
</g>
<g filter="url(#grain2)">
  <rect x="-80" y="-80" width="640" height="640" fill="none"/>
  <ellipse cx="317" cy="288" rx="9" ry="9" fill="#000" opacity=".9"/>
  <ellipse cx="172" cy="250" rx="16" ry="12" fill="#000" opacity=".8"/>
  <ellipse cx="245" cy="252" rx="16" ry="12" fill="#000" opacity=".85"/>
  <ellipse cx="270" cy="236" rx="10" ry="7" fill="#000" opacity=".6"/>
  <ellipse cx="203" cy="299" rx="14" ry="14" fill="#000" opacity=".6"/>
  <ellipse cx="315" cy="323" rx="7" ry="6" fill="#000" opacity=".7"/>
  <ellipse cx="368" cy="393" rx="12" ry="9" fill="#000" opacity=".8"/><ellipse cx="392" cy="397" rx="11" ry="10" fill="#000" opacity=".85"/><ellipse cx="382" cy="380" rx="9" ry="6" fill="#000" opacity=".6"/><ellipse cx="400" cy="382" rx="6" ry="5" fill="#000" opacity=".5"/>
  <ellipse cx="366" cy="431" rx="6" ry="8" fill="#000" opacity=".6"/>
  <ellipse cx="305" cy="455" rx="22" ry="28" fill="#000" opacity=".8"/>
  <path d="M420 462 L445 412" stroke="#000" stroke-width="7" opacity=".7"/>
  <path d="M387 202 L444 185" stroke="#000" stroke-width="3.5" opacity="1"/>
  <ellipse cx="440" cy="185" rx="5" ry="7" fill="#000" opacity=".6"/>
  <ellipse cx="120" cy="145" rx="6" ry="5" fill="#000" opacity=".5"/>
  <ellipse cx="131" cy="165" rx="7" ry="6" fill="#000" opacity=".5"/>
</g>
<defs><filter id="specks" x="-80" y="-80" width="640" height="640" filterUnits="userSpaceOnUse" color-interpolation-filters="sRGB">
  <feGaussianBlur in="SourceGraphic" stdDeviation="20" result="d"/>
  <feTurbulence type="fractalNoise" baseFrequency="0.28" numOctaves="2" seed="21" result="n"/>
  <feColorMatrix in="n" type="matrix" values="0 0 0 0 0  0 0 0 0 0  0 0 0 0 0  6 0 0 0 -3.6" result="na"/>
  <feComposite in="na" in2="d" operator="in" result="c"/>
  <feFlood flood-color="#ffffff"/>
  <feComposite in2="c" operator="in"/>
</filter></defs>
<g filter="url(#specks)" opacity=".75">
  <rect x="-80" y="-80" width="640" height="640" fill="none"/>
  <path d="M-80 330 L0 330 C60 320 140 330 200 355 C250 385 280 420 300 480 L300 560 L-80 560Z" fill="#000"/>
</g>
<defs><filter id="wb" x="-50%" y="-50%" width="200%" height="200%"><feTurbulence type="fractalNoise" baseFrequency="0.35" numOctaves="2" seed="8" result="t"/><feDisplacementMap in="SourceGraphic" in2="t" scale="7" xChannelSelector="R" yChannelSelector="G" result="dd"/><feGaussianBlur in="dd" stdDeviation=".8"/></filter></defs>
<g fill="#fff" filter="url(#wb)" opacity="1">
  <path d="M150 330 l8 -10 l14 -2 l12 6 l1 10 l-10 8 l-14 1 l-10 -6z"/>
  <path d="M76 370 l5 -4 l6 1 l4 5 l-1 6 l-6 3 l-6 -2 l-3 -5z"/>
  <path d="M225 302 l8 -4 l6 6 l-4 8 l-8 -2z"/>
  <ellipse cx="40" cy="270" rx="10" ry="8" opacity=".6"/>
</g>
</svg></div>
<!-- scrollbars -->
<div class="a" style="left:584px;top:105px;width:12px;height:492px;background:#fbfbf8;border-left:1px solid #f0f0ec"></div>
<div class="a" style="left:585px;top:106px;width:10px;height:11px;background:#eeeee8;border-radius:2px"></div>
<svg width="10" height="6" style="left:586px;top:109px"><path d="M1.5 4.5 L5 1.5 L8.5 4.5" stroke="#c4c4bc" stroke-width="1.5" fill="none"/></svg>
<div class="a" style="left:585px;top:585px;width:10px;height:11px;background:#eeeee8;border-radius:2px"></div>
<svg width="10" height="6" style="left:586px;top:589px"><path d="M1.5 1.5 L5 4.5 L8.5 1.5" stroke="#c4c4bc" stroke-width="1.5" fill="none"/></svg>
<!-- status bar -->
<div class="a" style="left:92px;top:597px;width:504px;height:12px;background:#f4f4f2;border-top:1px solid #e0e0dc"></div>
<div class="a" style="left:92px;top:598px;width:38px;height:11px;background:#fff"></div>
<div class="tx" style="left:97px;top:600px;font-size:8px;color:#111">100%</div>
<div class="a" style="left:130px;top:598px;width:1px;height:11px;background:#b8b8b8"></div>
<div class="a" style="left:134px;top:599px;width:10px;height:9px;border-radius:50%;background:#9a9a9a;border:1px solid #777"></div>
<div class="a" style="left:137px;top:601px;width:5px;height:5px;background:#eee;border-radius:1px"></div>
<div class="a" style="left:147px;top:598px;width:1px;height:11px;background:#b8b8b8"></div>
<div class="a" style="left:148px;top:598px;width:136px;height:11px;background:linear-gradient(#f0f0f0,#e4e4e4)"></div>
<div class="tx" style="left:172px;top:600px;font-size:8px;color:#111">Scratch: 159,6M/426,7M</div>
<div class="a" style="left:284px;top:598px;width:1px;height:11px;background:#a8a8a8"></div>
<svg width="6" height="8" style="left:288px;top:600px"><path d="M0.5 0.5 L5 3.5 L0.5 6.5Z" fill="#111"/></svg>
<div class="a" style="left:296px;top:598px;width:1px;height:11px;background:#c8c8c8"></div>
<div class="a" style="left:297px;top:598px;width:287px;height:11px;background:linear-gradient(#fafaf8,#f0f0ec)"></div>
<svg width="10" height="10" style="left:573px;top:599px"><path d="M2.5 1.5 L6 5 L2.5 8.5" stroke="#b4b4ac" stroke-width="1.5" fill="none"/></svg>
<div class="a" style="left:584px;top:597px;width:12px;height:12px;background:#f2f2ea"></div>

<!-- ===== RIGHT DOCK ===== -->
<div class="a" style="left:825px;top:64px;width:199px;height:15px;background:#585858"></div>
<div class="a" style="left:825px;top:64px;width:199px;height:1px;background:#3c3c3c"></div>
<svg width="199" height="15" style="left:825px;top:64px">
  <path d="M7.5 2.5v10 M10.5 2.5v10 M31.5 2.5v10 M34.5 2.5v10" stroke="#7a7a7a" stroke-width="1"/>
  <path d="M19.5 5 L15.5 7.5 L19.5 10Z M23.5 5 L19.5 7.5 L23.5 10Z" fill="#c8c8c8"/>
  <path d="M186 5 L190 7.5 L186 10Z M190 5 L194 7.5 L190 10Z" fill="#c8c8c8"/>
</svg>
<div class="a" style="left:825px;top:79px;width:26px;height:240px;background:#585858;border-radius:0 0 3px 3px"></div>
<div class="a" style="left:828px;top:79px;width:21px;height:236px;background:#ececec;border-radius:2px"></div>
<!-- dock groups -->
<div class="a" style="left:828px;top:80px;width:21px;height:7px;background:linear-gradient(#e4e4e4,#c8c8c8)"></div>
<div class="a" style="left:828px;top:167px;width:21px;height:2px;background:#6a6a6a"></div>
<div class="a" style="left:828px;top:169px;width:21px;height:8px;background:linear-gradient(#e4e4e4,#c8c8c8)"></div>
<div class="a" style="left:828px;top:223px;width:21px;height:2px;background:#6a6a6a"></div>
<div class="a" style="left:828px;top:225px;width:21px;height:9px;background:linear-gradient(#e4e4e4,#c8c8c8)"></div>
<div class="a" style="left:828px;top:279px;width:21px;height:2px;background:#6a6a6a"></div>
<div class="a" style="left:828px;top:281px;width:21px;height:8px;background:linear-gradient(#e4e4e4,#c8c8c8)"></div>
<svg width="24" height="240" style="left:826px;top:79px">
  <g fill="none" stroke="#222">
    <rect x="5.5" y="12.5" width="15" height="16" rx="1" stroke="#d4d4d4" fill="#f2f2f2"/>
    <path d="M8 14.5h3v3h-3z M8 19h3v3h-3z" stroke-width=".9"/><rect x="8" y="23.5" width="3" height="3" fill="#222"/>
    <path d="M13.5 14 h3 M16 14 C19 16 19 22 15 26" stroke-width="1.6"/>
    <rect x="5.5" y="33.5" width="15" height="15" rx="1" stroke="#d4d4d4" fill="#f2f2f2"/>
    <rect x="7.5" y="36.5" width="11" height="10" stroke-width="1.2"/><path d="M9.5 38 L16.5 41.5 L9.5 45Z" fill="#333" stroke="none"/>
    <path d="M9 82 L17 74" stroke-width="3" stroke-linecap="round"/><path d="M9 82 L17 74" stroke="#ddd" stroke-width="1"/>
    <rect x="5.5" y="101.5" width="15" height="17" rx="1" stroke="#d4d4d4" fill="#f2f2f2"/>
    <path d="M10 104 L10.5 111 M13 103 v8 M16 104 L15.5 111" stroke-width="1.1"/><circle cx="9.5" cy="105.5" r="1.5" fill="#222"/><circle cx="16.5" cy="105.5" r="1.5" fill="#222"/>
    <rect x="9.5" y="111.5" width="7" height="5" stroke-width="1.4" fill="#fff"/>
    <rect x="5.5" y="123.5" width="15" height="17" rx="1" stroke="#d4d4d4" fill="#f2f2f2"/>
    <path d="M8 126h4 M8 128.5h4" stroke-width="1"/><circle cx="14" cy="128" r="2.5" fill="#333" stroke="none"/>
    <path d="M7.5 132.5h11v5h-11z" stroke-width="1.2"/><path d="M11 134 h4 l-2 2z" fill="#222" stroke="none"/>
    <rect x="5.5" y="156.5" width="15" height="17" rx="1" stroke="#d4d4d4" fill="#f2f2f2"/>
    <path d="M8 170 L11.5 159 L15 170 M9.2 166h4.6" stroke-width="1.3"/><path d="M17 159 v12" stroke-width="1.1"/>
    <rect x="5.5" y="179.5" width="15" height="17" rx="1" stroke="#d4d4d4" fill="#f2f2f2"/>
    <path d="M12 183 h6 M14.5 183 v11 M17 183 v11" stroke-width="1.4"/><path d="M14 183 a3.2 3.2 0 0 0 0 6.4z" fill="#222" stroke="none"/>
    <rect x="5.5" y="212.5" width="15" height="17" rx="1" stroke="#d4d4d4" fill="#f2f2f2"/>
    <rect x="7.5" y="214.5" width="11" height="11" stroke-width="1.3" fill="#fafafa"/><path d="M9 217.5h4 M9 219.5h4 M14.5 217 v3 M9 223 h8" stroke-width="1.1"/>
  </g>
</svg>
<!-- panel column -->
<div class="a" style="left:849px;top:79px;width:175px;height:716px;background:#585858"></div>
<div class="a" style="left:851px;top:79px;width:170px;height:186px;background:#ececec;border-radius:3px 3px 0 0"></div>
<div class="a" style="left:851px;top:267px;width:170px;height:101px;background:#ececec;border-radius:3px 3px 0 0"></div>
<div class="a" style="left:851px;top:370px;width:170px;height:419px;background:#ececec;border-radius:3px 3px 0 0"></div>

<!-- ===== INFO PANEL ===== -->
<svg width="170" height="20" style="left:851px;top:79px">
  <defs><linearGradient id="hg" x1="0" y1="0" x2="0" y2="1"><stop offset="0" stop-color="#f0f0f0"/><stop offset="1" stop-color="#d4d4d4"/></linearGradient></defs>
  <path d="M2 19 V3 Q2 1 4 1 H166 Q168 1 168 3 V19Z" fill="url(#hg)"/>
  <path d="M150 19.5 L159 11.5 H170 V19.5Z" fill="#ececec"/>
  <path d="M150 19.5 L159 11.5 H169" stroke="#cfcfcf" stroke-width="1" fill="none"/>
  <path d="M151 6.5 h6" stroke="#777" stroke-width="1.2"/><path d="M162 3.5 l5 5 M167 3.5 l-5 5" stroke="#777" stroke-width="1"/>
  <path d="M155 15 h4 l-2 2.5z" fill="#333"/><path d="M160 12.5h7 M160 15h7 M160 17.5h7" stroke="#555" stroke-width="1"/>
</svg>
<div class="tab" style="left:855px;top:86px;width:48px"></div>
<div class="tab" style="left:903px;top:86px;width:51px"></div>
<div class="tab act" style="left:954px;top:86px;width:34px;height:13px"></div>
<div class="tx p" style="left:860px;top:89px;font-size:8.5px">Navigator</div>
<div class="tx p" style="left:908px;top:89px;font-size:8.5px">Histogram</div>
<div class="tx p" style="left:958px;top:89px;font-size:8.5px">Info</div>
<svg width="8" height="8" style="left:977px;top:89px"><path d="M1 1 l5 5 M6 1 l-5 5" stroke="#777" stroke-width="1"/></svg>
<div class="a" style="left:853px;top:98px;width:166px;height:1px;background:#c8c8c8"></div>
<div class="a" style="left:934px;top:101px;width:1px;height:51px;background:#b8b8b8"></div>
<div class="a" style="left:853px;top:152px;width:166px;height:1px;background:#b8b8b8"></div>
<div class="a" style="left:934px;top:156px;width:1px;height:22px;background:#b8b8b8"></div>
<div class="a" style="left:853px;top:180px;width:166px;height:1px;background:#b8b8b8"></div>
<div class="a" style="left:853px;top:204px;width:166px;height:1px;background:#b8b8b8"></div>
<div class="tx p" style="left:867px;top:106px;line-height:9px;text-align:left">R :<br>G :<br>B :</div>
<div class="tx p" style="left:897px;top:106px;line-height:9px;text-align:right;width:18px">168<br>178<br>225</div>
<div class="tx p" style="left:862px;top:141px">8-bit</div>
<div class="tx p" style="left:949px;top:106px;line-height:9px">C :<br>M :<br>Y :<br>K :</div>
<div class="tx p" style="left:980px;top:106px;line-height:9px;text-align:right;width:20px">33%<br>25%<br>0%<br>0%</div>
<div class="tx p" style="left:944px;top:141px">8-bit</div>
<div class="tx p" style="left:867px;top:159px;line-height:9px">X :<br>Y :</div>
<div class="tx p" style="left:890px;top:159px;line-height:9px;text-align:right;width:25px">2,40<br>17,67</div>
<div class="tx p" style="left:947px;top:159px;line-height:9px">W :<br>H :</div>
<svg width="170" height="90" style="left:851px;top:98px">
  <path d="M7 24 L12 19" stroke="#333" stroke-width="1.2"/><path d="M11 20 L14 17" stroke="#222" stroke-width="2.4"/>
  <path d="M89 24 L94 19" stroke="#333" stroke-width="1.2"/><path d="M93 20 L96 17" stroke="#222" stroke-width="2.4"/>
  <path d="M6 69.5 h9 M10.5 65 v9" stroke="#222" stroke-width="1.2"/><circle cx="15" cy="74" r=".9" fill="#222"/>
  <path d="M89.5 67.5 h6 v6 h-6z" stroke="#333" stroke-width="1" fill="none"/><path d="M88 75 l2 -2" stroke="#333" stroke-width="1"/>
</svg>
<div class="tx p" style="left:860px;top:191px">Doc: 1,03M/1,03M</div>
<div class="tx p" style="left:860px;top:213px;line-height:9.2px;font-size:8.4px">Click and drag to move layer or<br>selection.&nbsp; Use Shift and Alt for additional<br>options.</div>

<!-- ===== COLOR PANEL ===== -->
<svg width="170" height="20" style="left:851px;top:267px">
  <defs><linearGradient id="hg" x1="0" y1="0" x2="0" y2="1"><stop offset="0" stop-color="#f0f0f0"/><stop offset="1" stop-color="#d4d4d4"/></linearGradient></defs>
  <path d="M2 19 V3 Q2 1 4 1 H166 Q168 1 168 3 V19Z" fill="url(#hg)"/>
  <path d="M150 19.5 L159 11.5 H170 V19.5Z" fill="#ececec"/>
  <path d="M150 19.5 L159 11.5 H169" stroke="#cfcfcf" stroke-width="1" fill="none"/>
  <path d="M151 6.5 h6" stroke="#777" stroke-width="1.2"/><path d="M162 3.5 l5 5 M167 3.5 l-5 5" stroke="#777" stroke-width="1"/>
  <path d="M155 15 h4 l-2 2.5z" fill="#333"/><path d="M160 12.5h7 M160 15h7 M160 17.5h7" stroke="#555" stroke-width="1"/>
</svg>
<div class="tab act" style="left:855px;top:274px;width:39px;height:13px"></div>
<div class="tab" style="left:894px;top:274px;width:49px"></div>
<div class="tab" style="left:943px;top:274px;width:35px"></div>
<div class="tx p" style="left:860px;top:277px;font-size:8.5px">Color</div>
<svg width="8" height="8" style="left:885px;top:277px"><path d="M1 1 l5 5 M6 1 l-5 5" stroke="#777" stroke-width="1"/></svg>
<div class="tx p" style="left:899px;top:277px;font-size:8.5px">Swatches</div>
<div class="tx p" style="left:948px;top:277px;font-size:8.5px">Styles</div>
<div class="a" style="left:853px;top:286px;width:166px;height:1px;background:#d0d0d0"></div>
<div class="a" style="left:867px;top:304px;width:16px;height:16px;background:#fff;border:1px solid #9a9a9a"></div>
<div class="a" style="left:857px;top:294px;width:17px;height:16px;background:#0a1aa8;border:2px solid #6a6a6a;border-radius:1px"></div>
<div class="tx p" style="left:886px;top:294px;font-weight:bold;color:#333">R</div>
<div class="tx p" style="left:885px;top:313px;font-weight:bold;color:#333">G</div>
<div class="tx p" style="left:885px;top:332px;font-weight:bold;color:#333">B</div>
<div class="a" style="left:897px;top:296px;width:81px;height:4px;background:linear-gradient(90deg,#001ca8,#ff1ca8)"></div>
<div class="a" style="left:897px;top:315px;width:81px;height:4px;background:linear-gradient(90deg,#0000a8,#00ffa8)"></div>
<div class="a" style="left:897px;top:333px;width:81px;height:4px;background:linear-gradient(90deg,#001c00,#001cff)"></div>
<svg width="90" height="50" style="left:890px;top:300px">
  <path d="M4 6.5 L7.5 2 L11 6.5Z" fill="#e8f0e8" stroke="#4a7a4a" stroke-width="1"/>
  <path d="M13 24.5 L16.5 20 L20 24.5Z" fill="#e8f0e8" stroke="#4a7a4a" stroke-width="1"/>
  <path d="M56.5 43 L60 38.5 L63.5 43Z" fill="#e8f0e8" stroke="#4a7a4a" stroke-width="1"/>
</svg>
<div class="ibox" style="left:982px;top:292px;width:25px;height:15px"></div>
<div class="ibox" style="left:982px;top:310px;width:25px;height:15px"></div>
<div class="ibox" style="left:982px;top:329px;width:25px;height:15px"></div>
<div class="tx p" style="left:986px;top:296px">0</div>
<div class="tx p" style="left:986px;top:314px">28</div>
<div class="tx p" style="left:986px;top:333px">168</div>
<svg width="12" height="12" style="left:861px;top:331px"><path d="M5 1 L10 10 H0.5Z" fill="#f0f0f0" stroke="#555" stroke-width="1.2"/><path d="M5 4v3.5" stroke="#333" stroke-width="1.3"/><circle cx="5" cy="8.6" r=".7" fill="#333"/></svg>
<div class="a" style="left:874px;top:332px;width:10px;height:10px;background:#2a3c9c;border:1px solid #1a1a4a"></div>
<div class="a" style="left:856px;top:350px;width:152px;height:12px;background:linear-gradient(rgba(255,255,255,.3) 0%,rgba(255,255,255,0) 35%,rgba(0,0,0,0) 50%,#000 100%),linear-gradient(90deg,#e02818,#f0c020 10%,#e8e820 17%,#30b030 32%,#10a890 42%,#20b8f0 50%,#2040c0 64%,#401890 70%,#c02090 82%,#e83070 90%,#e02020)"></div>
<div class="a" style="left:1008px;top:350px;width:7px;height:6px;background:#fff"></div>
<div class="a" style="left:1008px;top:356px;width:7px;height:6px;background:#000"></div>

<!-- ===== LAYERS PANEL ===== -->
<svg width="170" height="20" style="left:851px;top:370px">
  <defs><linearGradient id="hg" x1="0" y1="0" x2="0" y2="1"><stop offset="0" stop-color="#f0f0f0"/><stop offset="1" stop-color="#d4d4d4"/></linearGradient></defs>
  <path d="M2 19 V3 Q2 1 4 1 H166 Q168 1 168 3 V19Z" fill="url(#hg)"/>
  <path d="M150 19.5 L159 11.5 H170 V19.5Z" fill="#ececec"/>
  <path d="M150 19.5 L159 11.5 H169" stroke="#cfcfcf" stroke-width="1" fill="none"/>
  <path d="M151 6.5 h6" stroke="#777" stroke-width="1.2"/><path d="M162 3.5 l5 5 M167 3.5 l-5 5" stroke="#777" stroke-width="1"/>
  <path d="M155 15 h4 l-2 2.5z" fill="#333"/><path d="M160 12.5h7 M160 15h7 M160 17.5h7" stroke="#555" stroke-width="1"/>
</svg>
<div class="tab act" style="left:855px;top:377px;width:44px;height:13px"></div>
<div class="tab" style="left:899px;top:377px;width:47px"></div>
<div class="tab" style="left:946px;top:377px;width:34px"></div>
<div class="tx p" style="left:860px;top:380px;font-size:8.5px">Layers</div>
<svg width="8" height="8" style="left:889px;top:380px"><path d="M1 1 l5 5 M6 1 l-5 5" stroke="#777" stroke-width="1"/></svg>
<div class="tx p" style="left:904px;top:380px;font-size:8.5px">Channels</div>
<div class="tx p" style="left:951px;top:380px;font-size:8.5px">Paths</div>
<div class="a" style="left:853px;top:389px;width:166px;height:1px;background:#d0d0d0"></div>
<div class="a" style="left:855px;top:393px;width:84px;height:14px;background:#f2f2f2;border:1px solid #d8d8d8"></div>
<div class="tx p" style="left:858px;top:397px;color:#a8a8a8">Normal</div>
<svg width="10" height="6" style="left:925px;top:398px"><path d="M1 1 L4.5 4.5 L8 1" stroke="#b4b4b4" stroke-width="1.3" fill="none"/></svg>
<div class="tx p" style="left:941px;top:396px;color:#b0b0b0">Opacity:</div>
<div class="a" style="left:974px;top:393px;width:42px;height:14px;background:#ececec;border:1px solid #d8d8d8"></div>
<div class="tx p" style="left:979px;top:397px;color:#b0b0b0">100%</div>
<div class="tx p" style="left:1005px;top:396px;color:#b8b8b8">›</div>
<div class="a" style="left:853px;top:409px;width:166px;height:1px;background:#d4d4d4"></div>
<div class="tx p" style="left:857px;top:417px;color:#b0b0b0">Lock:</div>
<svg width="60" height="14" style="left:881px;top:414px">
  <rect x="2.5" y="2.5" width="8" height="8" fill="#f4f4f4" stroke="#b0b0b0"/><rect x="2.5" y="2.5" width="4" height="4" fill="#d0d0d0"/><rect x="6.5" y="6.5" width="4" height="4" fill="#d0d0d0"/>
  <path d="M16 12 L25 3" stroke="#a8a8a8" stroke-width="2"/>
  <path d="M29 6.5 h9 M33.5 2 v9" stroke="#a0a0a0" stroke-width="1.3"/>
  <rect x="44" y="6" width="7" height="6" fill="#a8a8a8"/><path d="M45.5 6 v-2 a2 2 0 0 1 4 0 v2" stroke="#a8a8a8" stroke-width="1.2" fill="none"/>
</svg>
<div class="tx p" style="left:960px;top:417px;color:#b0b0b0">Fill:</div>
<div class="a" style="left:974px;top:414px;width:42px;height:14px;background:#ececec;border:1px solid #d8d8d8"></div>
<div class="tx p" style="left:979px;top:418px;color:#b0b0b0">100%</div>
<div class="tx p" style="left:1005px;top:417px;color:#b8b8b8">›</div>
<div class="a" style="left:853px;top:430px;width:166px;height:1px;background:#c8c8c8"></div>
<div class="a" style="left:871px;top:431px;width:136px;height:32px;background:#2a62c6"></div>
<div class="a" style="left:853px;top:462px;width:154px;height:1px;background:#c8c8c8"></div>
<div class="a" style="left:855px;top:440px;width:12px;height:12px;background:#f4f4f4;border:1px solid #c4c4c4"></div>
<svg width="10" height="6" style="left:856px;top:443px"><path d="M0.5 3 Q5 -1 9.5 3 Q5 7 0.5 3Z" fill="#fff" stroke="#222" stroke-width="1"/><circle cx="5" cy="3" r="1.6" fill="#111"/></svg>
<div class="a" style="left:873px;top:433px;width:26px;height:26px;background:#fff;border:2px solid #1a2a6a"></div>
<div class="a" style="left:875px;top:447px;width:14px;height:10px;background:radial-gradient(ellipse at 0% 100%,#a8b4e0 0%,#c8d0f0 50%,#fff0 80%)"></div>
<div class="tx" style="left:906px;top:443px;color:#fff;font-size:9px;font-style:italic">Background</div>
<svg width="10" height="10" style="left:986px;top:441px"><rect x="1" y="4" width="7" height="5.5" fill="#fff" stroke="#222" stroke-width=".8"/><path d="M2.5 4 v-1.5 a2 2 0 0 1 4 0 v1.5" stroke="#fff" stroke-width="1.2" fill="none"/><rect x="3.5" y="6" width="2" height="2" fill="#222"/></svg>
<div class="a" style="left:1008px;top:431px;width:13px;height:342px;background:#fcfcf8"></div>
<div class="a" style="left:1008px;top:431px;width:12px;height:13px;background:#e8e8e8;border:1px solid #dadada"></div>
<svg width="10" height="6" style="left:1009px;top:435px"><path d="M1.5 4.5 L5 1.5 L8.5 4.5" stroke="#c0c0c0" stroke-width="1.5" fill="none"/></svg>
<div class="a" style="left:1008px;top:760px;width:12px;height:12px;background:#f4f4f0;border:1px solid #e4e4e0"></div>
<svg width="10" height="6" style="left:1009px;top:763px"><path d="M1.5 1.5 L5 4.5 L8.5 1.5" stroke="#c0c0c0" stroke-width="1.5" fill="none"/></svg>
<div class="a" style="left:853px;top:773px;width:155px;height:1px;background:#c8c8c8"></div>
<div class="a" style="left:853px;top:774px;width:166px;height:14px;background:linear-gradient(#f0f0f0,#e8e8e8)"></div>
<svg width="170" height="20" style="left:851px;top:771px">
  <g fill="none" stroke="#444" stroke-width="1.2">
    <rect x="9" y="6" width="7" height="4" rx="2"/><rect x="15" y="6" width="7" height="4" rx="2"/>
    <rect x="54.5" y="4.5" width="10" height="9" fill="#fff" stroke="#555"/><circle cx="59.5" cy="9" r="3" fill="#aaa" stroke="none"/>
    <circle cx="81" cy="9" r="4.5" fill="#fff" stroke="#333"/><path d="M81 4.5 a4.5 4.5 0 0 0 0 9z" fill="#222" stroke="none"/><circle cx="86" cy="13" r=".8" fill="#222"/>
    <path d="M98.5 6.5 h3 l1 1 h5 v6 h-9z" fill="#fff" stroke="#444"/>
    <rect x="120.5" y="5.5" width="8" height="8" fill="#fff" stroke="#444"/><rect x="123" y="8" width="3" height="3" fill="#222" stroke="none"/>
    <path d="M143.5 6.5 h8 M144.5 7 l1 7 h5 l1 -7 M146 5 h4" stroke="#555"/>
  </g>
  <text x="32" y="13" font-family="Liberation Serif" font-style="italic" font-size="11" fill="#444">fx</text>
  <circle cx="45" cy="13" r=".7" fill="#333"/>
</svg>

<!-- ===== MINIMIZED ===== -->
<div class="mw" style="left:37px;width:126px"></div>
<div class="mw" style="left:165px;width:127px"></div>
<svg width="260" height="24" style="left:37px;top:771px">
  <g>
    <rect x="5" y="6" width="12" height="12" fill="#1c3466" stroke="#4a6aa8" stroke-width="1"/><text x="7" y="15.5" font-family="Liberation Sans" font-weight="bold" font-size="6" fill="#9cc0f0">Ps</text><path d="M14 3 l2 2 l-2 2 l-2 -2z" fill="#e8f0ff"/>
    <rect x="133" y="6" width="12" height="12" fill="#1c3466" stroke="#4a6aa8" stroke-width="1"/><text x="135" y="15.5" font-family="Liberation Sans" font-weight="bold" font-size="6" fill="#9cc0f0">Ps</text><path d="M142 3 l2 2 l-2 2 l-2 -2z" fill="#e8f0ff"/>
  </g>
</svg>
<div class="tx" style="left:56px;top:779px;color:#dfe6fa;font-weight:bold;font-size:11px;letter-spacing:.4px;transform:scaleX(.94);transform-origin:0 0">Untitle…</div>
<div class="tx" style="left:184px;top:779px;color:#dfe6fa;font-weight:bold;font-size:11px;letter-spacing:.4px;transform:scaleX(.94);transform-origin:0 0">Untitle…</div>
<div class="a mb" style="left:108px;top:775px"></div><div class="a mb" style="left:126px;top:775px"></div><div class="a mb" style="left:144px;top:775px;background:linear-gradient(135deg,#e8a0a0,#c86868)"></div>
<div class="a mb" style="left:236px;top:775px"></div><div class="a mb" style="left:254px;top:775px"></div><div class="a mb" style="left:272px;top:775px;background:linear-gradient(135deg,#e8a0a0,#c86868)"></div>
<svg width="260" height="24" style="left:37px;top:771px">
  <g fill="none" stroke="#f0f4ff" stroke-width="1.2">
    <rect x="77.5" y="9.5" width="5" height="4"/><rect x="75.5" y="11.5" width="5" height="4" fill="#7890e0"/>
    <rect x="93.5" y="8.5" width="8" height="7" stroke-width="1.1"/><path d="M93.5 9.5h8" stroke-width="2"/>
    <path d="M111 8 l7 7 M118 8 l-7 7" stroke-width="1.6"/>
    <rect x="205.5" y="9.5" width="5" height="4"/><rect x="203.5" y="11.5" width="5" height="4" fill="#7890e0"/>
    <rect x="221.5" y="8.5" width="8" height="7" stroke-width="1.1"/><path d="M221.5 9.5h8" stroke-width="2"/>
    <path d="M239 8 l7 7 M246 8 l-7 7" stroke-width="1.6"/>
  </g>
</svg>
<!-- ===== TASKBAR ===== -->
<div class="a" style="left:0;top:795px;width:1024px;height:24px;background:linear-gradient(#3c84f4 0,#2a6ae8 2px,#245ee0 5px,#225bdc 18px,#1f52c8 22px,#1c48b0 24px)"></div>
<div class="a" style="left:907px;top:795px;width:117px;height:24px;background:linear-gradient(#3cb0f8 0,#14a0f0 3px,#0e94e8 18px,#0a84d8 24px);border-left:1px solid #0a5ac0"></div>
<div class="a" style="left:0;top:795px;width:76px;height:24px;background:linear-gradient(#5cbc5c 0,#42a042 3px,#389838 12px,#2e8a2e 20px,#247024 24px);border-radius:0 11px 11px 0"></div>
<svg width="20" height="18" style="left:7px;top:798px">
  <path d="M2 3 Q5 1.5 8.5 3 L7.8 8.5 Q4.5 7 1.3 8.5Z" fill="#f05a28"/>
  <path d="M9.5 3.2 Q13 5 16.5 3.5 L15.8 9 Q12.5 10.5 8.8 9Z" fill="#7cc040"/>
  <path d="M1.2 9.6 Q4.5 8 7.7 9.6 L7 15 Q3.8 13.5 0.5 15Z" fill="#2a8ae8"/>
  <path d="M8.7 10 Q12.2 11.5 15.6 10 L15 15.5 Q11.5 17 8 15.5Z" fill="#f8c820"/>
</svg>
<div class="tx" style="left:27px;top:799px;color:#fff;font-weight:bold;font-style:italic;font-size:14px;text-shadow:1px 1px 1px #1a4a1a">start</div>
<div class="a" style="left:85px;top:798px;width:126px;height:19px;background:linear-gradient(#4a90f8,#3c80f0 4px,#3a7cec 15px,#3070e0);border-radius:2px;border:1px solid #5a9af8"></div>
<div class="a" style="left:213px;top:798px;width:127px;height:19px;background:linear-gradient(#1c4cb0,#1e56c4 4px,#2260d0);border-radius:2px;border:1px solid #1a40a0"></div>
<svg width="16" height="16" style="left:91px;top:799px"><circle cx="8" cy="8" r="6.5" fill="#3a5ab8"/><path d="M2 9 Q2 2 8 1.5 Q5 4 7 6 Q10 4 13 6 Q15 10 12 13 Q8 16 4 13.5 Q1.5 11.5 2 9Z" fill="#f07818"/><path d="M3.5 10 Q6 12 9.5 10" stroke="#ffc040" stroke-width="1.5" fill="none"/></svg>
<div class="tx" style="left:108px;top:803px;color:#fff;font-size:9px">Digital - print - color c...</div>
<div class="a" style="left:222px;top:801px;width:11px;height:12px;background:#1c3466;border:1px solid #4060a0"></div>
<div class="tx" style="left:223px;top:804px;color:#a8c8f8;font-size:6px;font-weight:bold">Ps</div>
<div class="tx" style="left:237px;top:803px;color:#fff;font-size:9px">Adobe Photoshop CS3</div>
<div class="tx" style="left:881px;top:803px;color:#fff;font-size:9px">EN</div>
<svg width="120" height="22" style="left:900px;top:796px">
  <circle cx="9" cy="11" r="6.5" fill="#e0f0ff" stroke="#5aa0f0" stroke-width="1"/><circle cx="9" cy="11" r="5" fill="#3c8ce8"/><path d="M10.5 8 L8 11 L10.5 14" stroke="#fff" stroke-width="1.8" fill="none"/>
  <rect x="18" y="7" width="12" height="8" rx="1" fill="#1a1a8a" stroke="#d0d8ff" stroke-width=".8"/><text x="19.5" y="13.5" font-family="Liberation Sans" font-weight="bold" font-style="italic" font-size="6" fill="#fff">WD</text>
  <path d="M37.5 5 L42 7 V11 Q42 15 37.5 17 Q33 15 33 11 V7Z" fill="#f0d020" stroke="#8a7010" stroke-width=".8"/><rect x="37" y="9" width="1.5" height="4" fill="#333"/>
  <rect x="47" y="6" width="7" height="6" fill="#8aa0c8" stroke="#333" stroke-width=".7"/><rect x="51" y="9" width="7" height="6" fill="#6a88b8" stroke="#333" stroke-width=".7"/><path d="M48 15h6" stroke="#ddd" stroke-width="1.2"/>
  <rect x="61" y="5" width="6" height="12" fill="#e8d8c0" stroke="#555" stroke-width=".7"/><circle cx="70" cy="14" r="3.5" fill="#fff" stroke="#333" stroke-width=".6"/><path d="M68.8 12 L72 14 L68.8 16Z" fill="#20a040"/>
</svg>
<div class="tx" style="left:980px;top:803px;color:#fff;font-size:9px">11:11 πμ</div>

<!-- ===== ANNOTATIONS ===== -->
<svg width="1024" height="819" style="left:0;top:0">
  <g fill="none" stroke="#fff" stroke-linecap="round" stroke-linejoin="round">
    <path d="M332 645.5 C328 636 324 626 319.4 617 C314 608 309 603 303.7 597.7 C298 591 293 584 287 578 C280 571 273 565 266.6 558.6 C259 552 251 545 244 539 C238 534 232 529 226 524" stroke-width="15"/>
    <path d="M265 524.5 L225.3 524 L224.6 555" stroke-width="15.5"/>
    <path d="M721.7 220.5 C727 216 733 212 739.3 208.7 C747 204 754 201 761.3 197 C767 193 771 189 776 183.8 C781 178 785 173 790.6 167.7 C795 163 800 159 805.2 156 C812 151 819 148 827.2 145.8 C834 143 840 141 846.2 140" stroke-width="15"/>
    <path d="M803.7 133.3 L849 133.3 L846.5 173" stroke-width="14.6"/>
  </g>
</svg>
<div class="tx" id="t1" style="left:605px;top:238px;color:#fff;font-weight:bold;font-size:10.6px;line-height:12px;white-space:pre">και ελέγχω τα χρώματα μου από εδώ
για ψηφιακή εκτύπωση συνήθως τα RGB
για τυπογραφία τα CMYK
Αν και συνήθως καλό είναι να δουλεύουμε
πάντα με το CMYK και να τσεκάρουμε με
την σκάλα PANTONE που έχουμε δίπλα μας</div>
<div class="tx" id="t2" style="left:222px;top:663px;color:#fff;font-weight:bold;font-size:10.7px">Βάζω τον κέρσορα μου στο χρώμα που θέλω να δώ</div>

</body></html>
